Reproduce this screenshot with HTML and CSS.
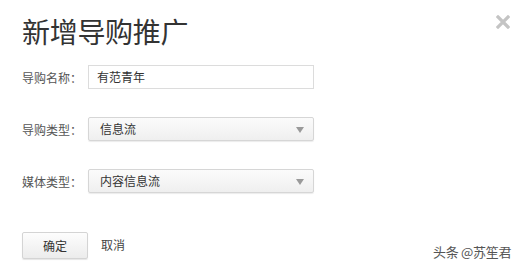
FILE: index.html
```html
<!DOCTYPE html>
<html lang="zh">
<head>
<meta charset="utf-8">
<link rel="stylesheet" href="styles.css">
</head>
<body>
<div class="dialog">
  <h1 class="title">新增导购推广</h1>
  <span class="close" aria-label="关闭">
    <svg width="14" height="14" viewBox="0 0 14 14"><path d="M2 2 L12 12 M12 2 L2 12" stroke="#c4c4c4" stroke-width="3.2" stroke-linecap="square"/></svg>
  </span>
  <div class="form">
    <div class="row">
      <label class="label">导购名称：</label>
      <div class="input">有范青年</div>
    </div>
    <div class="row">
      <label class="label">导购类型：</label>
      <div class="select"><span class="val">信息流</span><span class="arrow"></span></div>
    </div>
    <div class="row">
      <label class="label">媒体类型：</label>
      <div class="select"><span class="val">内容信息流</span><span class="arrow"></span></div>
    </div>
  </div>
  <div class="actions">
    <button class="btn">确定</button>
    <span class="cancel">取消</span>
  </div>
  <div class="watermark">头条 @苏笙君</div>
</div>
</body>
</html>
```
FILE: styles.css
```css
html, body {
  margin: 0;
  padding: 0;
  background: #fff;
}
body {
  font-family: "Noto Sans CJK SC", "Noto Sans", sans-serif;
  color: #333;
  width: 525px;
  height: 270px;
  overflow: hidden;
}
.dialog {
  position: relative;
  width: 525px;
  height: 270px;
  box-sizing: border-box;
  padding: 13px 0 0 22px;
}
.title {
  margin: 0;
  font-size: 28px;
  font-weight: 400;
  line-height: 36px;
  color: #333;
  letter-spacing: -0.3px;
}
.close {
  position: absolute;
  left: 496px;
  top: 15px;
  width: 14px;
  height: 14px;
  display: block;
}
.close svg { display: block; }
.form {
  margin-top: 16px;
  display: flex;
  flex-direction: column;
  gap: 28px;
}
.row {
  display: flex;
  align-items: center;
  height: 24px;
}
.label {
  width: 66px;
  font-size: 12px;
  color: #555;
  flex: none;
}
.input, .select {
  box-sizing: border-box;
  width: 226px;
  height: 24px;
  font-size: 12px;
  line-height: 22px;
  color: #333;
}
.input {
  border: 1px solid #dcdcdc;
  background: #fff;
  padding-left: 8px;
}
.select {
  display: flex;
  align-items: center;
  justify-content: space-between;
  border: 1px solid #d6d6d6;
  border-radius: 2px;
  background: linear-gradient(#fbfbfb, #efefef);
  box-shadow: 0 1px 1px rgba(0,0,0,0.08);
  padding: 0 9px 0 11px;
}
.arrow {
  width: 0;
  height: 0;
  border-left: 4.5px solid transparent;
  border-right: 4.5px solid transparent;
  border-top: 6px solid #9a9a9a;
  margin-top: 1px;
}
.actions {
  margin-top: 39px;
  display: flex;
  align-items: center;
  gap: 13px;
}
.btn {
  box-sizing: border-box;
  width: 66px;
  height: 27px;
  border: 1px solid #d4d4d4;
  border-radius: 2px;
  background: linear-gradient(#fdfdfd, #ececec);
  box-shadow: 0 1px 1px rgba(0,0,0,0.1);
  font-family: inherit;
  font-size: 12px;
  color: #333;
  padding: 0;
}
.cancel {
  font-size: 12px;
  color: #444;
  margin-top: -3px;
}
.watermark {
  position: absolute;
  left: 433px;
  top: 242px;
  font-size: 13px;
  color: #555;
  letter-spacing: -0.3px;
}
```
